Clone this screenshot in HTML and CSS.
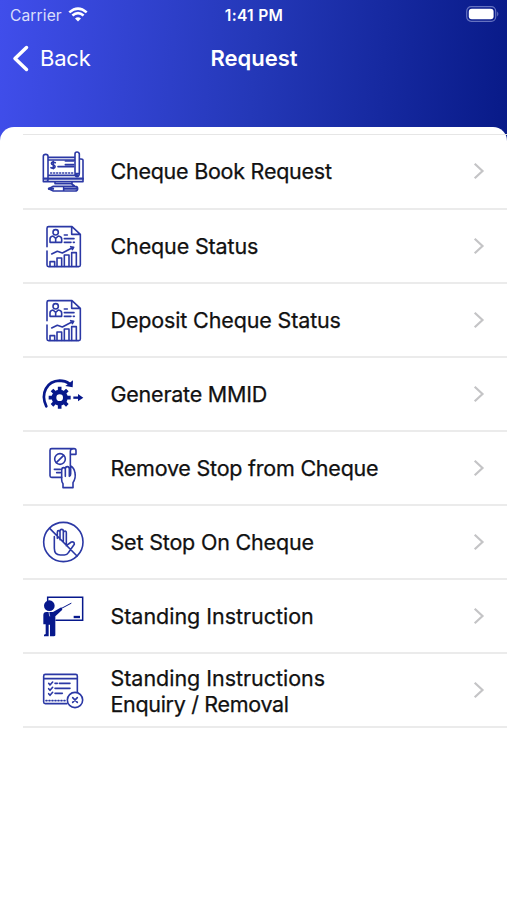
FILE: index.html
```html
<!DOCTYPE html>
<html lang="en">
<head>
<meta charset="utf-8">
<meta name="viewport" content="width=device-width, initial-scale=1">
<title>Request</title>
<link rel="stylesheet" href="styles.css">
</head>
<body>
<svg class="defs" aria-hidden="true">
  <symbol id="report" viewBox="0 0 210 180">
    <path d="M51 92V37q0-5 5-5h70l25 23v92q0 5-5 5H56q-5 0-5-5v-42M125 33v22h25"/>
    <circle cx="77" cy="49" r="8"/>
    <path d="M60 79V69q0-8 9-9l8 7 8-7q10 1 10 9v10zM77 67v9M103 57h9M103 68h29M103 79h20M130 79h3M65 114l17-8 15 5 33-17M122 92l9 2-4 7"/>
    <path d="M60 151v-14h14v14M81 151v-25h14v25M103 151v-34h14v34M125 151v-41h14v41"/>
  </symbol>
  <symbol id="chevron" viewBox="0 0 12 18"><path d="M1.7 1.7 9.5 9l-7.8 7.3"/></symbol>
</svg>
<header class="header">
  <div class="status">
    <div class="carrier"><span>Carrier</span>
      <svg class="wifi" viewBox="0 0 20 15"><path d="M1.3 5.4Q10-2.3 18.7 5.4M4.4 8.6q5.6-4.9 11.2 0"/><path class="dot" d="M10 14.5l-3-3q3-2.7 6 0z"/></svg>
    </div>
    <div class="time">1:41 PM</div>
    <svg class="battery" viewBox="0 0 34 16"><rect class="shell" x=".7" y=".7" width="29" height="14.6" rx="4.5"/><rect class="charge" x="2.8" y="2.8" width="24.8" height="10.4" rx="3"/><path class="tip" d="M31.3 5.5q2 2.5 0 5z"/></svg>
  </div>
  <nav class="nav">
    <a class="back"><svg class="arrow" viewBox="0 0 18 27"><path d="M14.5 2.5 3 13.5l11.5 11"/></svg><span>Back</span></a>
    <h1 class="title">Request</h1>
  </nav>
</header>
<main class="sheet">
  <ul class="list">
    <li class="row"><svg class="icon" viewBox="0 3 210 180">
      <path d="M40 125V49q0-6 7-6t7 6v70q0 5-7 5M54 52h81M54 106h88M40 125h119V61q0-4-6-4h-5M135 99V42q0-6 6-6t7 6v56q0 12-7 12-6 0-6-9h13M54 60h81"/>
      <path d="M76 68q-11-5-12 2 0 4 6 5 6 2 5 6-2 6-12 2M70 64v22M106 63h25M106 74h25M84 80h47"/>
      <path class="dashed" d="M62 99h69"/>
      <path class="heavy" d="M42 116h116"/>
      <path d="M75 126v5h51v-5M56 146l14-7h65q8 0 8 7t-8 7H70zM101 139v14M133 137l-8-5"/><path class="heavy" d="M105 146h34M57 146h12"/>
    </svg><span class="label l1">Cheque Book Request</span><svg class="chevron"><use href="#chevron"/></svg></li>
    <li class="row"><svg class="icon"><use href="#report"/></svg><span class="label l2">Cheque Status</span><svg class="chevron"><use href="#chevron"/></svg></li>
    <li class="row"><svg class="icon"><use href="#report"/></svg><span class="label l3">Deposit Cheque Status</span><svg class="chevron"><use href="#chevron"/></svg></li>
    <li class="row"><svg class="icon strong" viewBox="0 -4 210 180">
      <path class="arc" d="M49 123C30 84 51 47 89 46q17 0 29 9"/>
      <path class="fill" d="M129 45l-1 21-22-4z"/>
      <circle class="gear" cx="89" cy="97" r="17"/>
      <path class="teeth" d="M89 64v11M89 119v11M56 97h11M111 97h11M66 74l8 8M104 112l8 8M66 120l8-8M104 82l8-8"/>
      <path class="shaft" d="M130 97h18"/><path class="fill" d="M144 86l16 11-16 11z"/>
    </svg><span class="label l4">Generate MMID</span><svg class="chevron"><use href="#chevron"/></svg></li>
    <li class="row"><svg class="icon" viewBox="0 0 210 180">
      <path d="M95 118H65q-5 0-5-5V37q0-5 5-5h67q6 0 6 6v11h-17M121 84V40q0-8 11-8"/>
      <circle cx="90" cy="63" r="16"/><path d="M79 74l22-22M73 94h18M80 104h11"/>
      <path d="M99 149v-12q-4-5-4-12V97q0-8 6-8t5 8v18V93q0-7 6-7t6 7v22q4-1 4-8V84q11 6 13 21 3 15-6 29v15z"/>
    </svg><span class="label l5">Remove Stop from Cheque</span><svg class="chevron"><use href="#chevron"/></svg></li>
    <li class="row"><svg class="icon" viewBox="0 0 210 180">
      <circle cx="100" cy="90" r="59"/>
      <path d="M59 49l82 83M73 74v35q0 20 18 20h12q8 0 13-8l17-24q0-9-9-7l-15 11V63q0-6-4-6t-5 6v26M100 86V57q0-5-5-5t-5 5v26M90 73V61q0-5-4-5t-4 5v18"/>
    </svg><span class="label l6">Set Stop On Cheque</span><svg class="chevron"><use href="#chevron"/></svg></li>
    <li class="row"><svg class="icon strong" viewBox="0 0 210 180">
      <path class="board" d="M53 44V34h105v69H78"/>
      <circle class="fill" cx="58" cy="59" r="16"/>
      <path class="fill" d="M40 87q0-9 9-9h20l25-14 3 7-21 20v57q0 3-5 3H60v-35h-4v35H42v-5l5-2v-29h-7z"/>
      <path class="pointer" d="M91 69l32-17"/><path class="shaft" d="M131 93h19"/><path class="cut" d="M57 79l2 11"/>
    </svg><span class="label l7">Standing Instruction</span><svg class="chevron"><use href="#chevron"/></svg></li>
    <li class="row"><svg class="icon" viewBox="0 0 210 180">
      <path d="M111 131H46q-5 0-5-5V48q0-5 5-5h91q5 0 5 5v48M41 56h101"/>
      <path d="M56 70l4 5 8-9M56 86l4 5 8-9M56 101l4 5 8-9M75 70h7M88 70h32M75 85h45M75 100h22"/>
      <path class="dashed" d="M48 122h60"/>
      <circle cx="135" cy="120" r="23"/><path d="M128 113l14 14M142 113l-14 14"/>
    </svg><span class="label l8">Standing Instructions<br><span class="l9">Enquiry / Removal</span></span><svg class="chevron"><use href="#chevron"/></svg></li>
  </ul>
</main>
</body>
</html>
```
FILE: styles.css
```css
* { box-sizing: border-box; }
body {
  margin: 0;
  height: 900px;
  overflow: hidden;
  display: flex;
  flex-direction: column;
  background: linear-gradient(94deg, #404eeb 0, #2438b8 50%, #081a88 100%) top / 100% 142px no-repeat #fff;
  font-family: Inter, "Liberation Sans", sans-serif;
}
.defs { display: none; }
.header { height: 127px; color: #fff; }
.status {
  display: grid;
  grid-template-columns: 1fr auto 1fr;
  align-items: center;
  height: 30px;
  padding: 0 7px 0 10px;
  font-size: 15.6px;
}
.carrier { display: flex; align-items: center; gap: 6px; color: #d9defb; letter-spacing: .1px; }
.wifi { width: 20px; height: 15px; margin-top: -1px; fill: none; stroke: #fff; stroke-width: 2.6; }
.wifi .dot { fill: #fff; stroke: none; }
.time { font-weight: 600; font-size: 15.6px; letter-spacing: .3px; margin-right: 2px; }
.battery { width: 34px; height: 16px; justify-self: end; margin-top: -2px; }
.shell { fill: none; stroke: #6572c0; stroke-width: 1.2; }
.charge { fill: #fff; }
.tip { fill: #7884ca; }
.nav { display: grid; grid-template-columns: 1fr auto 1fr; align-items: center; height: 56px; padding: 0 11px 0 12px; }
.back { display: flex; align-items: center; gap: 10px; font-size: 22px; letter-spacing: -.2px; }
.arrow { width: 18px; height: 27px; fill: none; stroke: #fff; stroke-width: 3.5; stroke-linecap: round; stroke-linejoin: round; }
.title { margin: 0; font-size: 22px; font-weight: 600; }
.sheet { flex: 1; background: #fff; border-radius: 14px 14px 0 0; padding-top: 7.4px; }
.list { list-style: none; margin: 0 0 0 23px; padding: 0; border-top: 1px solid #e6e6e6; }
.row {
  display: flex;
  align-items: center;
  height: 74.13px;
  padding: 0 22px 0 7px;
  border-bottom: 2px solid #ebebeb;
}
.icon {
  width: 70px;
  height: 60px;
  flex: none;
  fill: none;
  stroke: #2b38a5;
  stroke-width: 4.8;
  stroke-linecap: round;
  stroke-linejoin: round;
}
.strong { stroke: #07188c; }
.dashed { stroke-dasharray: 3 6; }
.heavy { stroke-width: 7; }
.fill { fill: #07188c; stroke: none; }
.arc { stroke-width: 8; }
.gear { stroke-width: 14; }
.teeth { stroke-width: 11; stroke-linecap: butt; }
.shaft { stroke-width: 7; stroke-linecap: butt; }
.board { stroke-width: 4.5; stroke-linejoin: miter; }
.pointer { stroke-width: 3; }
.cut { stroke: #fff; stroke-width: 2; }
.label {
  flex: 1;
  margin-left: 10.5px;
  color: #111;
  font-size: 21.5px;
  line-height: 26px;
  white-space: nowrap;
  -webkit-text-stroke: .25px #111;
}
.l1 { letter-spacing: -.25px; }
.l2, .l3 { letter-spacing: -.14px; }
.l4, .l5 { letter-spacing: -.23px; }
.l6 { letter-spacing: -.19px; }
.l7, .l8 { letter-spacing: -.03px; }
.l8 { margin-top: 1.5px; }
.l9 { letter-spacing: -.32px; }
.chevron { width: 12px; height: 18px; flex: none; fill: none; stroke: #c4c4c6; stroke-width: 2.2; }
```
